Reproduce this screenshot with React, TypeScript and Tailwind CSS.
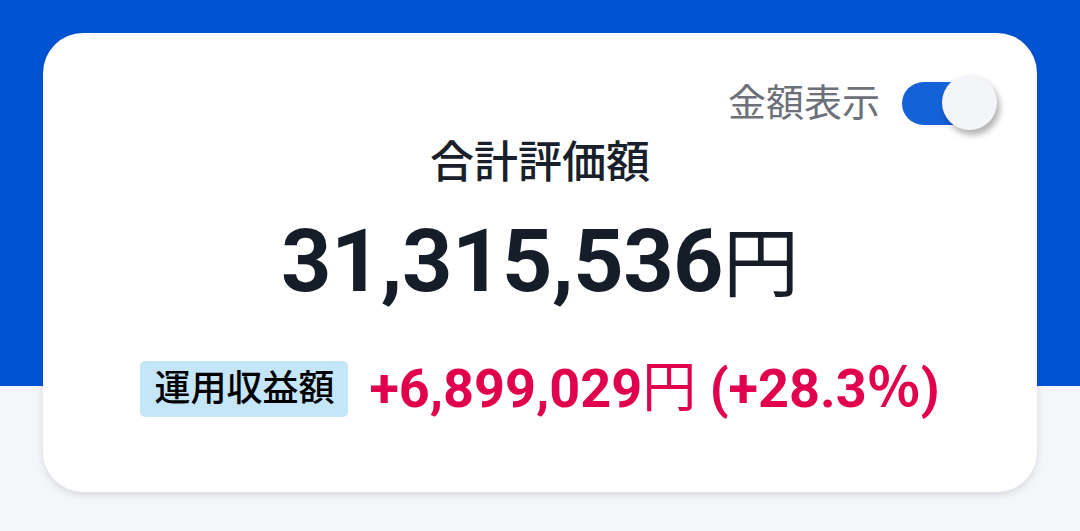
import { useState } from 'react';

const jp = "font-['Roboto','Noto_Sans_CJK_JP',sans-serif]";

function Toggle({ on, onChange }: { on: boolean; onChange: () => void }) {
  return (
    <button onClick={onChange} className="relative h-[43px] w-[95px]">
      <span className={'absolute left-0 top-0 h-[43px] w-[86px] rounded-full ' + (on ? 'bg-[#1461d8]' : 'bg-[#c7ccd6]')} />
      <span
        className={
          'absolute top-[-7px] h-[55px] w-[55px] rounded-full bg-[#f3f5f9] shadow-[3px_5px_6px_rgba(0,0,0,0.3)] ' +
          (on ? 'left-[40px]' : 'left-[-6px]')
        }
      />
    </button>
  );
}

export default function App() {
  const [show, setShow] = useState(true);

  return (
    <div className={'h-[531px] w-full bg-[linear-gradient(to_bottom,#0054d3_386px,#f4f6fa_386px)] px-[43px] pt-[33px] ' + jp}>
      <div className="flex h-[459px] flex-col items-center rounded-[40px] bg-white shadow-[0_3px_8px_rgba(0,0,0,0.12)]">
        <div className="flex w-full items-center justify-end gap-[22px] pr-[40px] pt-[49px]">
          <span className="text-[38px] leading-[43px] text-[#6b7079]">金額表示</span>
          <Toggle on={show} onChange={() => setShow(!show)} />
        </div>

        <h1 className="mt-[12px] text-[44px] font-medium leading-[52px] text-[#18202b]">合計評価額</h1>

        <div className="mt-[22px] flex items-baseline text-[#151d28]">
          <span className="text-[88px] font-bold leading-[100px] tracking-[-0.5px]">{show ? '31,315,536' : '******'}</span>
          <span className="text-[76px] leading-[100px]">円</span>
        </div>

        <div className="mt-[42px] flex items-center gap-[21px]">
          <span className="rounded-[5px] bg-[#c5e5f9] px-[14px] py-[5px] text-[36px] font-medium leading-[46px] text-black">運用収益額</span>
          <span className="text-[54px] font-bold leading-[64px] text-[#e0004e]">
            {show ? '+6,899,029' : '******'}
            <span className="font-normal">円</span>
            <span> (+28.3</span>
            <span>％</span>
            <span>)</span>
          </span>
        </div>
      </div>
    </div>
  );
}
